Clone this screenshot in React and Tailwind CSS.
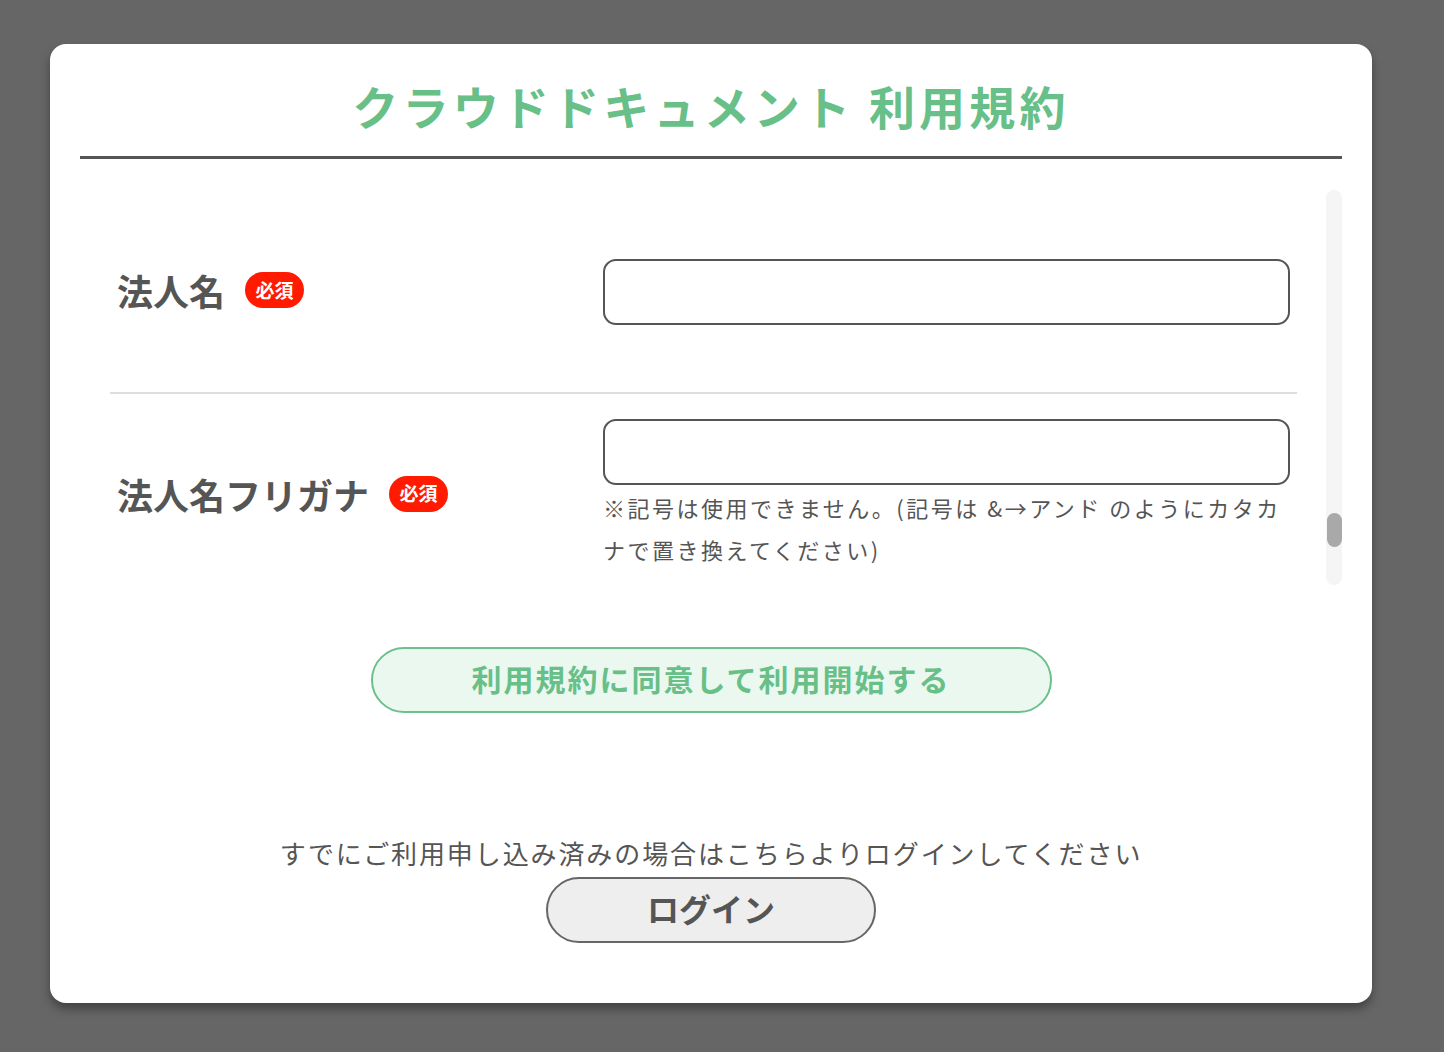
import React from 'react';

const font = { fontFamily: '"Noto Sans CJK JP", "Noto Sans", sans-serif' };

function Badge() {
  return (
    <span className="ml-[20px] flex h-[36px] w-[59px] items-center justify-center rounded-full bg-[#ff1a00] pb-[2px] text-[19px] font-bold leading-none text-white">
      必須
    </span>
  );
}

function Label({ children }) {
  return (
    <div className="flex w-[493px] shrink-0 items-center pb-[4px] pl-[7px]">
      <span className="text-[36px] font-bold leading-none text-[#555]">{children}</span>
      <Badge />
    </div>
  );
}

export default function App() {
  return (
    <div className="min-h-screen bg-[#666] pt-[44px] pb-[49px]" style={font}>
      <div className="ml-[50px] w-[1322px] rounded-[16px] bg-white px-[30px] pb-[60px] shadow-[0_6px_10px_rgba(0,0,0,0.35)]">
        {/* header */}
        <h1 className="border-b-[3px] border-[#555] pt-[31px] pb-[21px] text-center text-[46px] font-bold leading-[60px] tracking-[4.2px] text-[#68bf88]">
          クラウドドキュメント 利用規約
        </h1>

        {/* form area */}
        <div className="mt-[31px] flex h-[395px]">
          <div className="flex-1 overflow-hidden pl-[30px] pr-[29px]">
            <div className="flex items-center border-b-2 border-[#ddd] pt-[69px] pb-[67px] pr-[7px]">
              <Label>法人名</Label>
              <div className="h-[66px] flex-1 rounded-[13px] border-2 border-[#555]" />
            </div>
            <div className="flex items-center pt-[25px] pr-[7px]">
              <Label>法人名フリガナ</Label>
              <div className="flex-1">
                <div className="h-[66px] rounded-[13px] border-2 border-[#555]" />
                <p className="mt-[1px] mb-[2px] text-[22px] leading-[42px] tracking-[2.5px] text-[#555]">
                  ※記号は使用できません。(記号は &amp;→アンド のようにカタカナで置き換えてください)
                </p>
              </div>
            </div>
          </div>
          {/* scrollbar */}
          <div className="flex h-full w-[16px] flex-col rounded-full bg-[#f5f5f5]">
            <div className="mx-auto mt-[323px] h-[34px] w-[15px] rounded-full bg-[#a9a9a9]" />
          </div>
        </div>

        <button className="mx-auto mt-[62px] flex h-[66px] w-[681px] items-center justify-center rounded-full border-2 border-[#6cc08c] bg-[#ebf8f0] pb-[4px] text-[30px] font-bold tracking-[2px] text-[#68bf88]">
          利用規約に同意して利用開始する
        </button>

        <p className="mt-[123px] text-center text-[26px] leading-[34px] tracking-[1.9px] text-[#555]">
          すでにご利用申し込み済みの場合はこちらよりログインしてください
        </p>
        <button className="mx-auto mt-[7px] flex h-[66px] w-[330px] items-center justify-center rounded-full border-2 border-[#666] bg-[#eee] pb-[4px] text-[32px] font-bold text-[#555]">
          ログイン
        </button>
      </div>
    </div>
  );
}
